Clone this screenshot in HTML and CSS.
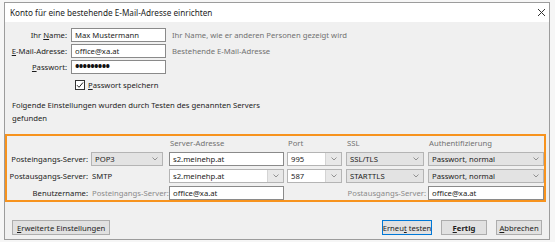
FILE: index.html
```html
<!DOCTYPE html>
<html lang="de">
<head>
<meta charset="utf-8">
<title>Konto einrichten</title>
<link rel="stylesheet" href="styles.css">
</head>
<body>
<div class="dialog">
  <div class="titlebar">
    <span class="title">Konto für eine bestehende E-Mail-Adresse einrichten</span>
    <svg class="close" width="9" height="9" viewBox="0 0 9 9"><path d="M1 1L8 8M8 1L1 8" stroke="#333" stroke-width="1"/></svg>
  </div>

  <div class="identity">
    <span class="lbl">Ihr <u>N</u>ame:</span>
    <div class="field">Max Mustermann</div>
    <span class="hint">Ihr Name, wie er anderen Personen gezeigt wird</span>

    <span class="lbl"><u>E</u>-Mail-Adresse:</span>
    <div class="field">office@xa.at</div>
    <span class="hint">Bestehende E-Mail-Adresse</span>

    <span class="lbl"><u>P</u>asswort:</span>
    <div class="field dots">•••••••••</div>
    <span></span>

    <span></span>
    <div class="check">
      <span class="box"><svg width="8" height="8" viewBox="0 0 8 8"><path d="M1 4.2L3 6.3L7 1.5" fill="none" stroke="#222" stroke-width="1"/></svg></span>
      <span><u>P</u>asswort speichern</span>
    </div>
    <span></span>
  </div>

  <p class="note">Folgende Einstellungen wurden durch Testen des genannten Servers<br>gefunden</p>

  <div class="servers">
    <span></span>
    <span></span>
    <span class="head">Server-Adresse</span>
    <span class="head">Port</span>
    <span class="head">SSL</span>
    <span class="head">Authentifizierung</span>

    <span class="lbl">Posteingangs-Server:</span>
    <div class="select w72"><span>POP3</span><svg class="chev" width="6" height="4" viewBox="0 0 6 4"><path d="M0.5 0.5L3 3L5.5 0.5" fill="none" stroke="#888" stroke-width="0.9"/></svg></div>
    <div class="field w115">s2.meinehp.at</div>
    <div class="combo w55"><span class="txt">995</span><span class="btn"><svg class="chev" width="6" height="4" viewBox="0 0 6 4"><path d="M0.5 0.5L3 3L5.5 0.5" fill="none" stroke="#888" stroke-width="0.9"/></svg></span></div>
    <div class="select w78"><span>SSL/TLS</span><svg class="chev" width="6" height="4" viewBox="0 0 6 4"><path d="M0.5 0.5L3 3L5.5 0.5" fill="none" stroke="#888" stroke-width="0.9"/></svg></div>
    <div class="select w116"><span>Passwort, normal</span><svg class="chev" width="6" height="4" viewBox="0 0 6 4"><path d="M0.5 0.5L3 3L5.5 0.5" fill="none" stroke="#888" stroke-width="0.9"/></svg></div>

    <span class="lbl">Postausgangs-Server:</span>
    <span class="plain">SMTP</span>
    <div class="combo w115"><span class="txt">s2.meinehp.at</span><span class="btn"><svg class="chev" width="6" height="4" viewBox="0 0 6 4"><path d="M0.5 0.5L3 3L5.5 0.5" fill="none" stroke="#888" stroke-width="0.9"/></svg></span></div>
    <div class="combo w55"><span class="txt">587</span><span class="btn"><svg class="chev" width="6" height="4" viewBox="0 0 6 4"><path d="M0.5 0.5L3 3L5.5 0.5" fill="none" stroke="#888" stroke-width="0.9"/></svg></span></div>
    <div class="select w78"><span>STARTTLS</span><svg class="chev" width="6" height="4" viewBox="0 0 6 4"><path d="M0.5 0.5L3 3L5.5 0.5" fill="none" stroke="#888" stroke-width="0.9"/></svg></div>
    <div class="select w116"><span>Passwort, normal</span><svg class="chev" width="6" height="4" viewBox="0 0 6 4"><path d="M0.5 0.5L3 3L5.5 0.5" fill="none" stroke="#888" stroke-width="0.9"/></svg></div>

    <span class="lbl">Benutzername:</span>
    <span class="sub">Posteingangs-Server:</span>
    <div class="field w115">office@xa.at</div>
    <span class="sub span2">Postausgangs-Server:</span>
    <div class="field w116">office@xa.at</div>
  </div>

  <div class="actions">
    <button class="btn-ui"><u>E</u>rweiterte Einstellungen</button>
    <div class="right">
      <button class="btn-ui focus w48">Erneu<u>t</u>&nbsp;testen</button>
      <button class="btn-ui bold w46"><u>F</u>ertig</button>
      <button class="btn-ui w46"><u>A</u>bbrechen</button>
    </div>
  </div>
</div>
</body>
</html>
```

FILE: styles.css
```css
* { box-sizing: border-box; }

body {
  margin: 0;
  background: #f6f6f6;
  font-family: "Noto Sans", "Open Sans", sans-serif;
  font-size: 7.7px;
  color: #1c1c1c;
}

u { text-decoration: underline; text-underline-offset: 1px; }

.dialog {
  margin: 2px 0 0 4px;
  width: 546px;
  height: 238px;
  border: 1px solid #9c9c9c;
  background: #f0f0f0;
  display: flex;
  flex-direction: column;
}

.titlebar {
  height: 19px;
  flex: none;
  background: #ffffff;
  display: flex;
  align-items: center;
  justify-content: space-between;
  padding: 0 3px 0 5px;
  font-size: 8.2px;
}

.identity {
  display: grid;
  grid-template-columns: 62px 95px 1fr;
  grid-auto-rows: 14px;
  column-gap: 4px;
  row-gap: 2px;
  padding-top: 6px;
  align-items: center;
}

.lbl { text-align: right; white-space: nowrap; }

.hint { color: #707070; padding-left: 2px; white-space: nowrap; }

.field {
  height: 14px;
  background: #ffffff;
  border: 1px solid #8a8a8a;
  padding: 0 3px;
  display: flex;
  align-items: center;
  white-space: nowrap;
}

.dots { font-size: 12px; letter-spacing: -0.7px; font-weight: bold; padding-bottom: 1px; color: #111; }

.check {
  display: flex;
  align-items: center;
  gap: 3px;
  padding-left: 4px;
  margin-top: 4px;
}

.box {
  width: 10px;
  height: 10px;
  border: 1px solid #333;
  background: #fff;
  display: flex;
  align-items: center;
  justify-content: center;
}

.note {
  margin: 9px 0 0 7px;
  line-height: 13px;
}

.servers {
  margin-top: 9px;
  width: 541px;
  border: 2px solid #f7931e;
  display: grid;
  grid-template-columns: 84px 78px 118px 59px 82px 116px;
  grid-template-rows: 13px 14px 14px 14px;
  row-gap: 3px;
  align-items: center;
}

.servers .lbl { padding-right: 3px; }

.head { color: #707070; padding-left: 1px; }

.plain { padding-left: 1px; }

.sub { color: #8a8a8a; white-space: nowrap; padding-left: 1px; }
.sub.span2 { grid-column: span 2; text-align: right; padding-right: 2px; }

.w72 { width: 72px; }
.w115 { width: 115px; }
.w55 { width: 55px; }
.w78 { width: 78px; }
.w116 { width: 116px; }

.select {
  height: 14px;
  background: #e3e3e3;
  border: 1px solid #b4b4b4;
  display: flex;
  align-items: center;
  justify-content: space-between;
  padding: 0 4px 0 3px;
}

.combo {
  height: 14px;
  background: #e8e8e8;
  border: 1px solid #b4b4b4;
  display: flex;
}

.combo .txt {
  flex: 1;
  background: #ffffff;
  border-right: 1px solid #d4d4d4;
  display: flex;
  align-items: center;
  padding: 0 3px;
}

.combo .btn {
  width: 15px;
  display: flex;
  align-items: center;
  justify-content: center;
}

.actions {
  margin-top: 18px;
  display: flex;
  justify-content: space-between;
  padding: 0 7px 0 7px;
}

.right { display: flex; gap: 9px; }

.btn-ui {
  height: 15px;
  font: inherit;
  color: #1c1c1c;
  background: #e1e1e1;
  border: 1px solid #adadad;
  padding: 0 4px;
  white-space: nowrap;
  display: flex;
  align-items: center;
  justify-content: center;
}

.btn-ui.w46 { width: 46px; }
.btn-ui.w48 { width: 50px; padding: 0 1px; }
.btn-ui.focus { border-color: #0078d7; }
.btn-ui.bold { font-weight: bold; }
```
